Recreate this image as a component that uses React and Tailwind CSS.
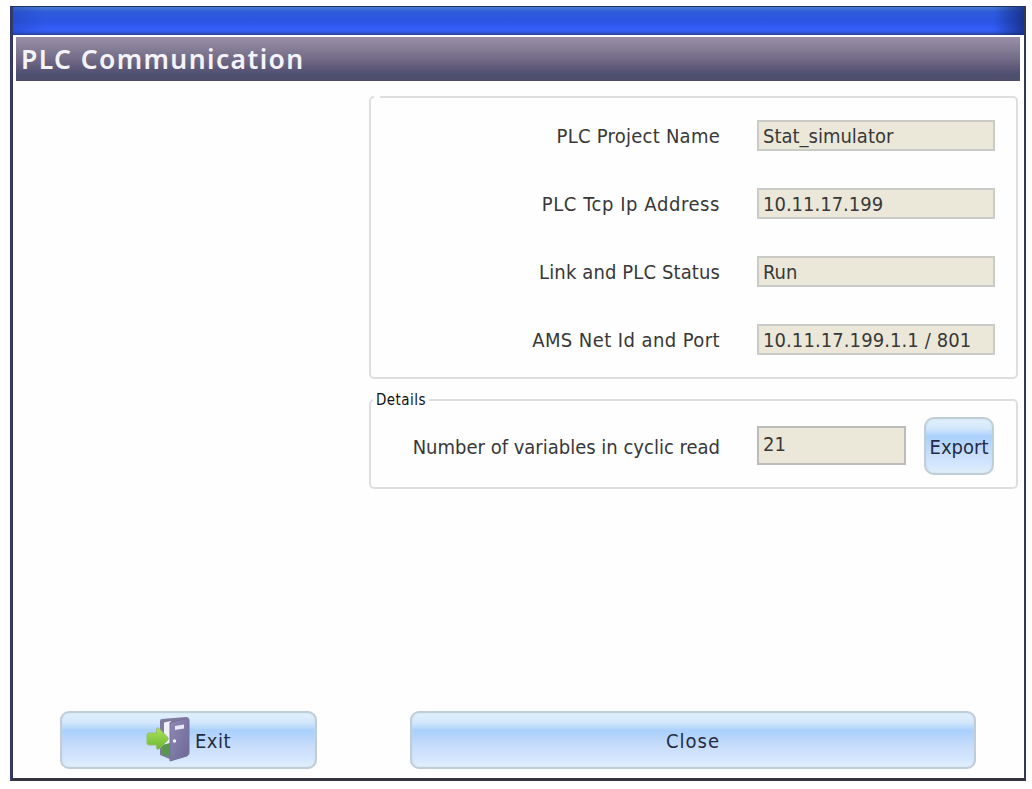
const body = "font-['DejaVu_Sans_Condensed','DejaVu_Sans',sans-serif] [font-stretch:condensed]";

const rows = [
  ["PLC Project Name", "Stat_simulator", "tracking-[0.250px]", "tracking-[0px]"],
  ["PLC Tcp Ip Address", "10.11.17.199", "tracking-[0.580px]", "tracking-[0px]"],
  ["Link and PLC Status", "Run", "tracking-[0.120px]", "tracking-[0px]"],
  ["AMS Net Id and Port", "10.11.17.199.1.1 / 801", "tracking-[0.420px]", "tracking-[0.090px]"],
];

const glossy =
  "flex items-center justify-center border-2 border-[#bfcdd6] bg-[linear-gradient(180deg,#e4f3fb_0%,#d3e7fb_20%,#a9d0fc_34%,#b9d6fb_48%,#cbdffb_65%,#d3e6fe_82%,#e6f2f8_100%)] bg-origin-border text-[#1f2c45] shadow-[inset_0_0_2px_#c5d9ea]";

function ExitIcon() {
  return (
    <svg width="44" height="46" viewBox="0 0 44 46" className="-mt-[2px] shrink-0">
      <defs>
        <linearGradient id="door" x1="0" x2="1" y1="0" y2="1">
          <stop offset="0" stopColor="#8f8ab5" />
          <stop offset="1" stopColor="#6b6694" />
        </linearGradient>
        <linearGradient id="arrow" x1="0" x2="0" y1="0" y2="1">
          <stop offset="0" stopColor="#aee257" />
          <stop offset="1" stopColor="#6ab833" />
        </linearGradient>
      </defs>
      <path d="M14 5Q14 3 16 3L40 1Q43 1 43 4V36L39 39L26 44L14 39Z" fill="#7f7b9f" />
      <path d="M18 6.500L25 5V38L18 35Z" fill="#eff0fa" />
      <path d="M16 29L24 27V41L16 38Z" fill="#5a9650" />
      <path d="M24 6.500L41 2.500Q43 2 43 4V37Q43 39 41 40L24 45Z" fill="url(#door)" stroke="#77729d" />
      <path d="M29 10L38 8.500V12.500L29 14Z" fill="#e8e8f6" />
      <circle cx="28.500" cy="25" r="1.700" fill="#f4f4fc" />
      <path d="M1 19Q1 17 3 17H10.500V13Q11 11 13 12.500L21.500 21Q23 22.500 21.500 24.500L13 33Q10.500 34 10.500 32V29H3Q1 29 1 27Z" fill="url(#arrow)" stroke="#96bd72" />
    </svg>
  );
}

function Field({ label, value, labelTracking, valueTracking }) {
  return (
    <div className="flex h-[31px] items-center">
      <div className={`w-[349px] text-right whitespace-nowrap ${labelTracking}`}>{label}</div>
      <div className={`ml-[37px] flex h-[31px] w-[238px] items-center border-2 border-[#cacbc7] bg-[#ebe8d9] pt-px pl-[4px] whitespace-nowrap ${valueTracking}`}>
        {value}
      </div>
    </div>
  );
}

export default function App() {
  return (
    <div className={`h-[789px] w-[1032px] overflow-hidden bg-white pt-[6px] pl-[10px] text-[20px] leading-none text-[#383838] ${body}`}>
      <div className="flex h-[775px] w-[1016px] flex-col border-t border-r-2 border-b-[3px] border-l-[3px] border-t-[#20305f] border-r-[#343b4e] border-b-[#33343f] border-l-[#343868] bg-[#fefefe]">
        <div className="h-[28px] shrink-0 bg-[linear-gradient(90deg,#1e3fae66_0%,transparent_3%,transparent_97%,#122a7acc_100%),linear-gradient(180deg,#4a7bd0_0%,#2d5bdc_18%,#2b55e2_50%,#345efb_82%,#3158dc_90%,#27409a_100%)]" />
        <div className="mr-[4px] ml-[3px] mt-[2px] flex h-[44px] shrink-0 items-center bg-[linear-gradient(180deg,#9a8ea8_0%,#827b93_30%,#716986_52%,#5d5877_72%,#4d5072_85%,#504e66_100%)] pl-[5px] font-['Noto_Sans',sans-serif] text-[26.500px] font-semibold tracking-[1.400px] whitespace-nowrap text-[#f4f3f8] [font-stretch:normal]">
          PLC Communication
        </div>

        <fieldset className="mt-[15px] ml-[356px] h-[283px] w-[649px] shrink-0 rounded-[5px] border-2 border-[#dedede]">
          <legend className="ml-[3px] h-[2px] w-[6px]" />
          <div className="flex flex-col gap-[37px] pt-[22px]">
            {rows.map(([label, value, lt, vt]) => (
              <Field key={label} label={label} value={value} labelTracking={lt} valueTracking={vt} />
            ))}
          </div>
        </fieldset>

        <fieldset className="mt-[12px] ml-[356px] h-[98px] w-[649px] shrink-0 rounded-[5px] border-2 border-[#dedede]">
          <legend className="ml-[2px] px-[3px] pt-px text-[15px] leading-[16px] tracking-[0.450px] text-[#111]">Details</legend>
          <div className="flex items-start">
            <div className="mt-[29px] w-[349px] text-right whitespace-nowrap">Number of variables in cyclic read</div>
            <div className="mt-[18px] ml-[37px] h-[39px] w-[149px] border-2 border-[#bcbcba] bg-[#ebe8da] pt-[6px] pl-[4px]">21</div>
            <button className={`mt-[9px] ml-[18px] h-[58px] w-[70px] rounded-[10px] pt-[2px] ${glossy}`}>Export</button>
          </div>
        </fieldset>

        <div className="mt-auto mb-[9px] ml-[47px] flex shrink-0">
          <button className={`h-[58px] w-[257px] gap-[5px] rounded-[9px] ${glossy}`}>
            <ExitIcon />
            <span className="pt-[2px] tracking-[0.500px]">Exit</span>
          </button>
          <button className={`ml-[93px] h-[58px] w-[566px] rounded-[9px] pt-[2px] tracking-[1px] ${glossy}`}>Close</button>
        </div>
      </div>
    </div>
  );
}
